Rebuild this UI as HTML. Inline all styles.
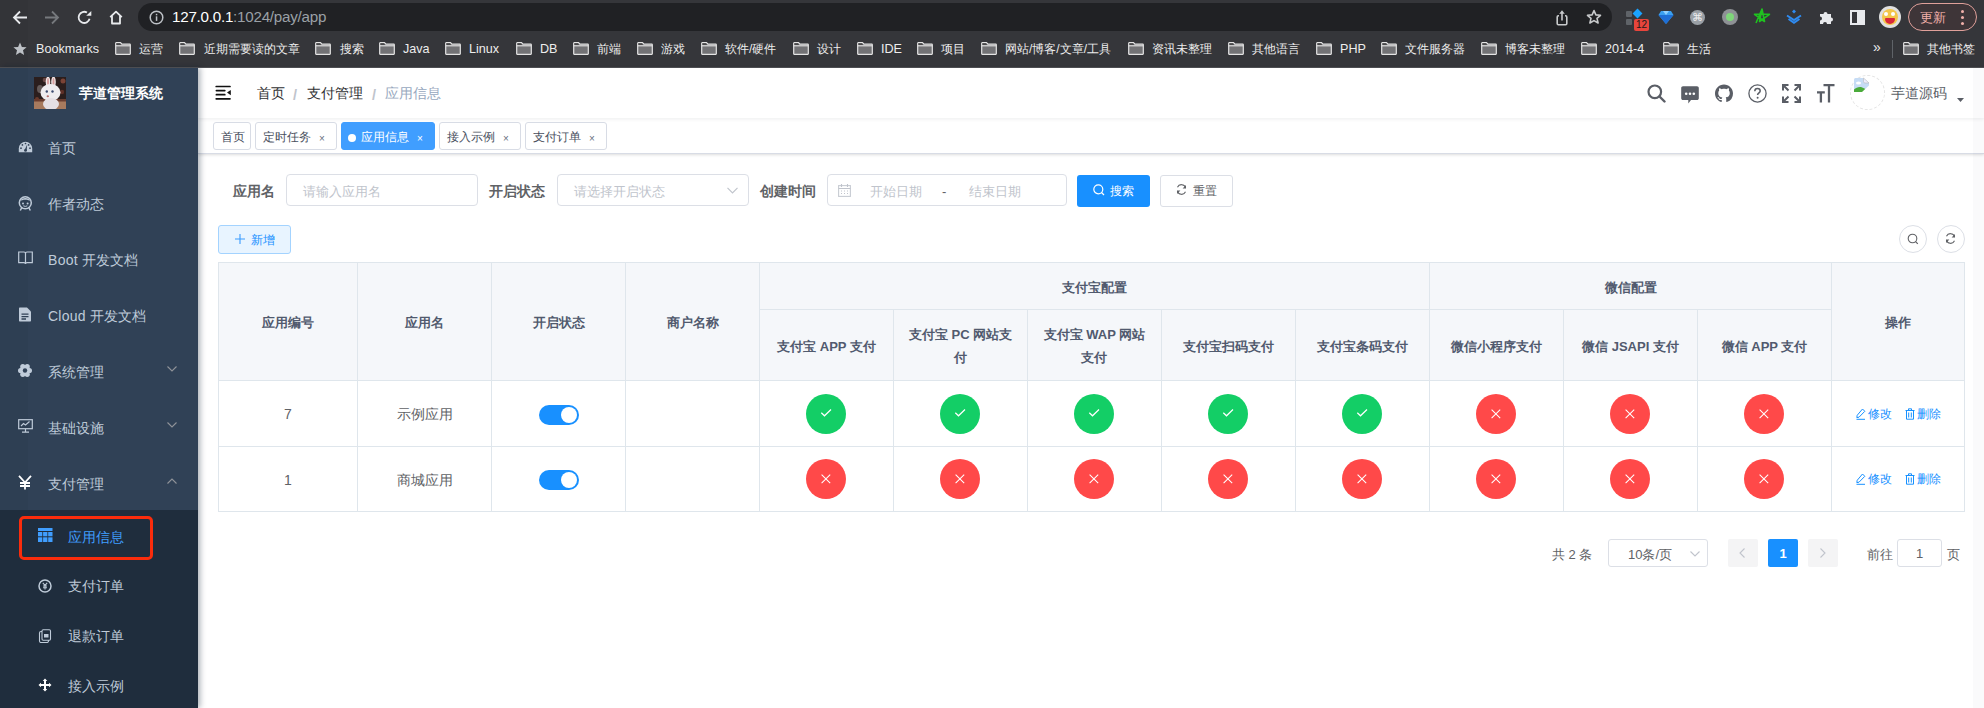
<!DOCTYPE html>
<html><head><meta charset="utf-8">
<style>
*{box-sizing:border-box}
html,body{margin:0;padding:0}
body{width:1984px;height:708px;overflow:hidden;position:relative;background:#fff;font-family:"Liberation Sans",sans-serif;}
.a{position:absolute}
.t{position:absolute;white-space:nowrap;line-height:1}
/* chrome */
#chrome{position:absolute;left:0;top:0;width:1984px;height:67px;background:#35363a}
#omni{position:absolute;left:138px;top:3px;width:1474px;height:28px;border-radius:14px;background:#202124}
.bm{position:absolute;top:43px;font-size:12px;color:#ededed;line-height:12px}
.fd{position:absolute;top:42px;width:16px;height:13px}
/* sidebar */
#side{position:absolute;left:0;top:67px;width:198px;height:641px;background:#304156;box-shadow:2px 0 6px rgba(0,21,41,.35);z-index:2}
.mi{position:absolute;left:0;width:198px;height:56px}
.mt{position:absolute;left:48px;font-size:14px;color:#bfcbd9;line-height:14px}
/* main */
#nav{position:absolute;left:198px;top:67px;width:1786px;height:51px;background:#fff;box-shadow:0 1px 4px rgba(0,21,41,.08);z-index:1}
#tags{position:absolute;left:198px;top:118px;width:1786px;height:36px;background:#fff;border-bottom:1px solid #d8dce5;box-shadow:0 1px 3px 0 rgba(0,0,0,.12),0 0 3px 0 rgba(0,0,0,.04)}
.tag{position:absolute;top:4px;height:28px;border:1px solid #d8dce5;border-radius:3px;background:#fff;color:#495060;font-size:12px;line-height:28px;padding-left:7px}
.tag .x{position:absolute;font-size:10px;color:#6a7080;line-height:28px}
.lbl{position:absolute;top:184px;font-size:14px;font-weight:700;color:#606266;line-height:14px}
.inp{position:absolute;top:174px;height:32px;border:1px solid #dcdfe6;border-radius:4px;background:#fff}
.ph{position:absolute;font-size:13px;color:#c0c4cc;line-height:13px;top:10px}
/* table */
#tbl{position:absolute;left:218px;top:261px;width:1747px;height:251px;border:1px solid #dfe6ec;border-right:none;border-bottom:none}
.cl{position:absolute;background:#dfe6ec}
.th{position:absolute;font-size:13px;font-weight:700;color:#515a6e;line-height:23px;text-align:center;white-space:nowrap}
.td{position:absolute;font-size:14px;color:#606266;line-height:14px;text-align:center;white-space:nowrap}
.ok,.no{position:absolute;width:40px;height:40px;border-radius:50%}
.ok{background:#13ce66}.no{background:#ff4949}
.sw{position:absolute;width:40px;height:20px;border-radius:10px;background:#1890ff}
.sw:after{content:"";position:absolute;right:2px;top:2px;width:16px;height:16px;border-radius:50%;background:#fff}
.lk{position:absolute;font-size:12px;color:#1890ff;line-height:12px}
</style></head><body>

<div id="chrome">
  <div class="a" style="left:0;top:0;width:28px;height:67px;background:rgba(0,0,0,.03)"></div>
  <svg class="a" style="left:12px;top:10px" width="16" height="15" viewBox="0 0 16 15"><path d="M15 7.5H2.5M8 1.5L2 7.5L8 13.5" fill="none" stroke="#e8eaed" stroke-width="1.8"/></svg>
  <svg class="a" style="left:44px;top:10px" width="16" height="15" viewBox="0 0 16 15"><path d="M1 7.5H13.5M8 1.5L14 7.5L8 13.5" fill="none" stroke="#76797d" stroke-width="1.8"/></svg>
  <svg class="a" style="left:76px;top:9px" width="17" height="17" viewBox="0 0 17 17"><path d="M13.6 9.85A5.6 5.6 0 1 1 11 3.55" fill="none" stroke="#e8eaed" stroke-width="1.8"/><path d="M10.2 6.8H15.3V2Z" fill="#e8eaed"/></svg>
  <svg class="a" style="left:108px;top:10px" width="16" height="15" viewBox="0 0 16 15"><path d="M2.2 7.2L8 1.6L13.8 7.2M4 5.8V13.5H12V5.8" fill="none" stroke="#e8eaed" stroke-width="1.8" stroke-linejoin="round"/></svg>
  <div id="omni"></div>
  <svg class="a" style="left:149px;top:10px" width="15" height="15" viewBox="0 0 15 15"><circle cx="7.5" cy="7.5" r="6.3" fill="none" stroke="#bdc1c6" stroke-width="1.5"/><rect x="6.8" y="6.3" width="1.5" height="4.6" fill="#bdc1c6"/><rect x="6.8" y="3.8" width="1.5" height="1.5" fill="#bdc1c6"/></svg>
  <div class="t" id="url" style="left:172px;top:9px;font-size:15.2px;line-height:15px;letter-spacing:-0.25px;color:#fff">127.0.0.1<span style="color:#9aa0a6">:1024/pay/app</span></div>
  <svg class="a" style="left:1554px;top:8px" width="16" height="18" viewBox="0 0 16 18"><path d="M5 7.8H4.3Q3.2 7.8 3.2 8.9V15.6Q3.2 16.7 4.3 16.7H11.7Q12.8 16.7 12.8 15.6V8.9Q12.8 7.8 11.7 7.8H11" fill="none" stroke="#c8cacc" stroke-width="1.6"/><path d="M8 12.5V5" stroke="#c8cacc" stroke-width="1.6"/><path d="M5.2 5.8L8 2.2L10.8 5.8Z" fill="#c8cacc"/></svg>
  <svg class="a" style="left:1585px;top:8px" width="18" height="18" viewBox="0 0 18 18"><path d="M9 2.6L10.9 6.9L15.5 7.3L12 10.4L13.1 15L9 12.6L4.9 15L6 10.4L2.5 7.3L7.1 6.9Z" fill="none" stroke="#c8cacc" stroke-width="1.6" stroke-linejoin="round"/></svg>
  <!-- extensions -->
  <div class="a" style="left:1626px;top:11px;width:6px;height:6px;background:#5f6368;border-radius:1px"></div>
  <div class="a" style="left:1626px;top:19px;width:6px;height:6px;background:#5f6368;border-radius:1px"></div>
  <div class="a" style="left:1634px;top:10px;width:7px;height:7px;background:#1aa3ff;transform:rotate(45deg)"></div>
  <div class="a" style="left:1634px;top:19px;width:15px;height:12px;background:#e8453c;border-radius:2px;color:#1a1a1a;font-size:10px;line-height:12px;text-align:center;font-weight:400">12</div>
  <svg class="a" style="left:1658px;top:9px" width="16" height="16" viewBox="0 0 16 16"><path d="M3 2H13L15.5 6L8 15L0.5 6Z" fill="#3ba0f0"/><path d="M0.5 6H15.5L8 15Z" fill="#1f6fd6"/><path d="M5 2L8 6L11 2" fill="#8fd0ff"/></svg>
  <div class="a" style="left:1690px;top:10px;width:15px;height:15px;border-radius:50%;background:#9aa0a6"></div>
  <div class="t" style="left:1692px;top:12px;font-size:11px;color:#eee;line-height:11px">&#8984;</div>
  <div class="a" style="left:1722px;top:9px;width:16px;height:16px;border-radius:50%;background:#8e9195"></div>
  <div class="a" style="left:1726px;top:13px;width:8px;height:8px;border-radius:50%;background:#7fd67a"></div>
  <svg class="a" style="left:1753px;top:8px" width="18" height="18" viewBox="0 0 18 18"><path d="M9 1L11.5 13.5L1.5 6.3H16.5L6.5 13.5Z M3 15L9 1" fill="none" stroke="#1fc21f" stroke-width="1.6" stroke-linejoin="round"/></svg>
  <svg class="a" style="left:1785px;top:8px" width="18" height="16" viewBox="0 0 18 16"><path d="M9 1.5L11 3.5L9 5.5L7 3.5Z" fill="#2f8bf0"/><path d="M2 7.5L9 12L16 7.5M3.5 11L9 14.8L14.5 11" fill="none" stroke="#2f8bf0" stroke-width="1.9"/></svg>
  <svg class="a" style="left:1818px;top:9px" width="16" height="16" viewBox="0 0 16 16"><path d="M2 5H5.5A2 2 0 1 1 9.5 5H13V8.5A2 2 0 1 1 13 12.5V15H9A2 2 0 1 0 5 15H2V11.5A2 2 0 1 0 2 7.5Z" fill="#e8eaed"/></svg>
  <div class="a" style="left:1850px;top:10px;width:15px;height:15px;border:2px solid #e8eaed"></div>
  <div class="a" style="left:1857px;top:10px;width:8px;height:15px;background:#e8eaed"></div>
  <div class="a" style="left:1879px;top:6px;width:22px;height:22px;border-radius:50%;background:#e0e0e0"></div>
  <div class="a" style="left:1882px;top:9px;width:16px;height:16px;border-radius:50%;background:#f3c64a"></div>
  <div class="a" style="left:1885px;top:18px;width:10px;height:6px;border-radius:1px 1px 5px 5px;background:#d8283a"></div><div class="a" style="left:1884px;top:12px;width:4px;height:4px;border-radius:50%;background:#fff"></div><div class="a" style="left:1891px;top:12px;width:4px;height:4px;border-radius:50%;background:#fff"></div>
  <div class="a" style="left:1908px;top:3px;width:69px;height:28px;border-radius:14px;border:1.5px solid #e0a09a;background:#3e3538"></div>
  <div class="t" style="left:1920px;top:11px;font-size:13px;line-height:13px;color:#f2b0aa">更新</div>
  <div class="a" style="left:1961px;top:10px;width:3px;height:3px;border-radius:50%;background:#f2b0aa;box-shadow:0 6px 0 #f2b0aa,0 12px 0 #f2b0aa"></div>
  <!-- bookmarks -->
  <svg class="a" style="left:13px;top:42px" width="14" height="14" viewBox="0 0 14 14"><path d="M7 0.5L8.9 4.9L13.6 5.2L10 8.3L11.1 12.9L7 10.4L2.9 12.9L4 8.3L0.4 5.2L5.1 4.9Z" fill="#bdc1c6"/></svg><div class="bm" style="left:36px;font-size:12.6px">Bookmarks</div><svg class="fd" style="left:115px" width="16" height="13" viewBox="0 0 16 13"><path d="M0.7 1.2Q0.7 0.7 1.2 0.7H5.5L7 2.2H14.8Q15.3 2.2 15.3 2.7V11.8Q15.3 12.3 14.8 12.3H1.2Q0.7 12.3 0.7 11.8Z" fill="#727275" stroke="#e4e4e4" stroke-width="1.2"/><path d="M1.3 1.5H5L6 2.6H1.3Z" fill="#1e1e20"/><path d="M0.7 3.8H15.3" stroke="#e4e4e4" stroke-width="1.1"/></svg><div class="bm" style="left:139px">运营</div><svg class="fd" style="left:179px" width="16" height="13" viewBox="0 0 16 13"><path d="M0.7 1.2Q0.7 0.7 1.2 0.7H5.5L7 2.2H14.8Q15.3 2.2 15.3 2.7V11.8Q15.3 12.3 14.8 12.3H1.2Q0.7 12.3 0.7 11.8Z" fill="#727275" stroke="#e4e4e4" stroke-width="1.2"/><path d="M1.3 1.5H5L6 2.6H1.3Z" fill="#1e1e20"/><path d="M0.7 3.8H15.3" stroke="#e4e4e4" stroke-width="1.1"/></svg><div class="bm" style="left:204px">近期需要读的文章</div><svg class="fd" style="left:315px" width="16" height="13" viewBox="0 0 16 13"><path d="M0.7 1.2Q0.7 0.7 1.2 0.7H5.5L7 2.2H14.8Q15.3 2.2 15.3 2.7V11.8Q15.3 12.3 14.8 12.3H1.2Q0.7 12.3 0.7 11.8Z" fill="#727275" stroke="#e4e4e4" stroke-width="1.2"/><path d="M1.3 1.5H5L6 2.6H1.3Z" fill="#1e1e20"/><path d="M0.7 3.8H15.3" stroke="#e4e4e4" stroke-width="1.1"/></svg><div class="bm" style="left:340px">搜索</div><svg class="fd" style="left:379px" width="16" height="13" viewBox="0 0 16 13"><path d="M0.7 1.2Q0.7 0.7 1.2 0.7H5.5L7 2.2H14.8Q15.3 2.2 15.3 2.7V11.8Q15.3 12.3 14.8 12.3H1.2Q0.7 12.3 0.7 11.8Z" fill="#727275" stroke="#e4e4e4" stroke-width="1.2"/><path d="M1.3 1.5H5L6 2.6H1.3Z" fill="#1e1e20"/><path d="M0.7 3.8H15.3" stroke="#e4e4e4" stroke-width="1.1"/></svg><div class="bm" style="left:403px;font-size:12.6px">Java</div><svg class="fd" style="left:445px" width="16" height="13" viewBox="0 0 16 13"><path d="M0.7 1.2Q0.7 0.7 1.2 0.7H5.5L7 2.2H14.8Q15.3 2.2 15.3 2.7V11.8Q15.3 12.3 14.8 12.3H1.2Q0.7 12.3 0.7 11.8Z" fill="#727275" stroke="#e4e4e4" stroke-width="1.2"/><path d="M1.3 1.5H5L6 2.6H1.3Z" fill="#1e1e20"/><path d="M0.7 3.8H15.3" stroke="#e4e4e4" stroke-width="1.1"/></svg><div class="bm" style="left:469px;font-size:12.6px">Linux</div><svg class="fd" style="left:516px" width="16" height="13" viewBox="0 0 16 13"><path d="M0.7 1.2Q0.7 0.7 1.2 0.7H5.5L7 2.2H14.8Q15.3 2.2 15.3 2.7V11.8Q15.3 12.3 14.8 12.3H1.2Q0.7 12.3 0.7 11.8Z" fill="#727275" stroke="#e4e4e4" stroke-width="1.2"/><path d="M1.3 1.5H5L6 2.6H1.3Z" fill="#1e1e20"/><path d="M0.7 3.8H15.3" stroke="#e4e4e4" stroke-width="1.1"/></svg><div class="bm" style="left:540px;font-size:12.6px">DB</div><svg class="fd" style="left:573px" width="16" height="13" viewBox="0 0 16 13"><path d="M0.7 1.2Q0.7 0.7 1.2 0.7H5.5L7 2.2H14.8Q15.3 2.2 15.3 2.7V11.8Q15.3 12.3 14.8 12.3H1.2Q0.7 12.3 0.7 11.8Z" fill="#727275" stroke="#e4e4e4" stroke-width="1.2"/><path d="M1.3 1.5H5L6 2.6H1.3Z" fill="#1e1e20"/><path d="M0.7 3.8H15.3" stroke="#e4e4e4" stroke-width="1.1"/></svg><div class="bm" style="left:597px">前端</div><svg class="fd" style="left:637px" width="16" height="13" viewBox="0 0 16 13"><path d="M0.7 1.2Q0.7 0.7 1.2 0.7H5.5L7 2.2H14.8Q15.3 2.2 15.3 2.7V11.8Q15.3 12.3 14.8 12.3H1.2Q0.7 12.3 0.7 11.8Z" fill="#727275" stroke="#e4e4e4" stroke-width="1.2"/><path d="M1.3 1.5H5L6 2.6H1.3Z" fill="#1e1e20"/><path d="M0.7 3.8H15.3" stroke="#e4e4e4" stroke-width="1.1"/></svg><div class="bm" style="left:661px">游戏</div><svg class="fd" style="left:701px" width="16" height="13" viewBox="0 0 16 13"><path d="M0.7 1.2Q0.7 0.7 1.2 0.7H5.5L7 2.2H14.8Q15.3 2.2 15.3 2.7V11.8Q15.3 12.3 14.8 12.3H1.2Q0.7 12.3 0.7 11.8Z" fill="#727275" stroke="#e4e4e4" stroke-width="1.2"/><path d="M1.3 1.5H5L6 2.6H1.3Z" fill="#1e1e20"/><path d="M0.7 3.8H15.3" stroke="#e4e4e4" stroke-width="1.1"/></svg><div class="bm" style="left:725px">软件/硬件</div><svg class="fd" style="left:793px" width="16" height="13" viewBox="0 0 16 13"><path d="M0.7 1.2Q0.7 0.7 1.2 0.7H5.5L7 2.2H14.8Q15.3 2.2 15.3 2.7V11.8Q15.3 12.3 14.8 12.3H1.2Q0.7 12.3 0.7 11.8Z" fill="#727275" stroke="#e4e4e4" stroke-width="1.2"/><path d="M1.3 1.5H5L6 2.6H1.3Z" fill="#1e1e20"/><path d="M0.7 3.8H15.3" stroke="#e4e4e4" stroke-width="1.1"/></svg><div class="bm" style="left:817px">设计</div><svg class="fd" style="left:857px" width="16" height="13" viewBox="0 0 16 13"><path d="M0.7 1.2Q0.7 0.7 1.2 0.7H5.5L7 2.2H14.8Q15.3 2.2 15.3 2.7V11.8Q15.3 12.3 14.8 12.3H1.2Q0.7 12.3 0.7 11.8Z" fill="#727275" stroke="#e4e4e4" stroke-width="1.2"/><path d="M1.3 1.5H5L6 2.6H1.3Z" fill="#1e1e20"/><path d="M0.7 3.8H15.3" stroke="#e4e4e4" stroke-width="1.1"/></svg><div class="bm" style="left:881px;font-size:12.6px">IDE</div><svg class="fd" style="left:917px" width="16" height="13" viewBox="0 0 16 13"><path d="M0.7 1.2Q0.7 0.7 1.2 0.7H5.5L7 2.2H14.8Q15.3 2.2 15.3 2.7V11.8Q15.3 12.3 14.8 12.3H1.2Q0.7 12.3 0.7 11.8Z" fill="#727275" stroke="#e4e4e4" stroke-width="1.2"/><path d="M1.3 1.5H5L6 2.6H1.3Z" fill="#1e1e20"/><path d="M0.7 3.8H15.3" stroke="#e4e4e4" stroke-width="1.1"/></svg><div class="bm" style="left:941px">项目</div><svg class="fd" style="left:981px" width="16" height="13" viewBox="0 0 16 13"><path d="M0.7 1.2Q0.7 0.7 1.2 0.7H5.5L7 2.2H14.8Q15.3 2.2 15.3 2.7V11.8Q15.3 12.3 14.8 12.3H1.2Q0.7 12.3 0.7 11.8Z" fill="#727275" stroke="#e4e4e4" stroke-width="1.2"/><path d="M1.3 1.5H5L6 2.6H1.3Z" fill="#1e1e20"/><path d="M0.7 3.8H15.3" stroke="#e4e4e4" stroke-width="1.1"/></svg><div class="bm" style="left:1005px">网站/博客/文章/工具</div><svg class="fd" style="left:1128px" width="16" height="13" viewBox="0 0 16 13"><path d="M0.7 1.2Q0.7 0.7 1.2 0.7H5.5L7 2.2H14.8Q15.3 2.2 15.3 2.7V11.8Q15.3 12.3 14.8 12.3H1.2Q0.7 12.3 0.7 11.8Z" fill="#727275" stroke="#e4e4e4" stroke-width="1.2"/><path d="M1.3 1.5H5L6 2.6H1.3Z" fill="#1e1e20"/><path d="M0.7 3.8H15.3" stroke="#e4e4e4" stroke-width="1.1"/></svg><div class="bm" style="left:1152px">资讯未整理</div><svg class="fd" style="left:1228px" width="16" height="13" viewBox="0 0 16 13"><path d="M0.7 1.2Q0.7 0.7 1.2 0.7H5.5L7 2.2H14.8Q15.3 2.2 15.3 2.7V11.8Q15.3 12.3 14.8 12.3H1.2Q0.7 12.3 0.7 11.8Z" fill="#727275" stroke="#e4e4e4" stroke-width="1.2"/><path d="M1.3 1.5H5L6 2.6H1.3Z" fill="#1e1e20"/><path d="M0.7 3.8H15.3" stroke="#e4e4e4" stroke-width="1.1"/></svg><div class="bm" style="left:1252px">其他语言</div><svg class="fd" style="left:1316px" width="16" height="13" viewBox="0 0 16 13"><path d="M0.7 1.2Q0.7 0.7 1.2 0.7H5.5L7 2.2H14.8Q15.3 2.2 15.3 2.7V11.8Q15.3 12.3 14.8 12.3H1.2Q0.7 12.3 0.7 11.8Z" fill="#727275" stroke="#e4e4e4" stroke-width="1.2"/><path d="M1.3 1.5H5L6 2.6H1.3Z" fill="#1e1e20"/><path d="M0.7 3.8H15.3" stroke="#e4e4e4" stroke-width="1.1"/></svg><div class="bm" style="left:1340px;font-size:12.6px">PHP</div><svg class="fd" style="left:1381px" width="16" height="13" viewBox="0 0 16 13"><path d="M0.7 1.2Q0.7 0.7 1.2 0.7H5.5L7 2.2H14.8Q15.3 2.2 15.3 2.7V11.8Q15.3 12.3 14.8 12.3H1.2Q0.7 12.3 0.7 11.8Z" fill="#727275" stroke="#e4e4e4" stroke-width="1.2"/><path d="M1.3 1.5H5L6 2.6H1.3Z" fill="#1e1e20"/><path d="M0.7 3.8H15.3" stroke="#e4e4e4" stroke-width="1.1"/></svg><div class="bm" style="left:1405px">文件服务器</div><svg class="fd" style="left:1481px" width="16" height="13" viewBox="0 0 16 13"><path d="M0.7 1.2Q0.7 0.7 1.2 0.7H5.5L7 2.2H14.8Q15.3 2.2 15.3 2.7V11.8Q15.3 12.3 14.8 12.3H1.2Q0.7 12.3 0.7 11.8Z" fill="#727275" stroke="#e4e4e4" stroke-width="1.2"/><path d="M1.3 1.5H5L6 2.6H1.3Z" fill="#1e1e20"/><path d="M0.7 3.8H15.3" stroke="#e4e4e4" stroke-width="1.1"/></svg><div class="bm" style="left:1505px">博客未整理</div><svg class="fd" style="left:1581px" width="16" height="13" viewBox="0 0 16 13"><path d="M0.7 1.2Q0.7 0.7 1.2 0.7H5.5L7 2.2H14.8Q15.3 2.2 15.3 2.7V11.8Q15.3 12.3 14.8 12.3H1.2Q0.7 12.3 0.7 11.8Z" fill="#727275" stroke="#e4e4e4" stroke-width="1.2"/><path d="M1.3 1.5H5L6 2.6H1.3Z" fill="#1e1e20"/><path d="M0.7 3.8H15.3" stroke="#e4e4e4" stroke-width="1.1"/></svg><div class="bm" style="left:1605px;font-size:12.6px">2014-4</div><svg class="fd" style="left:1663px" width="16" height="13" viewBox="0 0 16 13"><path d="M0.7 1.2Q0.7 0.7 1.2 0.7H5.5L7 2.2H14.8Q15.3 2.2 15.3 2.7V11.8Q15.3 12.3 14.8 12.3H1.2Q0.7 12.3 0.7 11.8Z" fill="#727275" stroke="#e4e4e4" stroke-width="1.2"/><path d="M1.3 1.5H5L6 2.6H1.3Z" fill="#1e1e20"/><path d="M0.7 3.8H15.3" stroke="#e4e4e4" stroke-width="1.1"/></svg><div class="bm" style="left:1687px">生活</div><svg class="fd" style="left:1903px" width="16" height="13" viewBox="0 0 16 13"><path d="M0.7 1.2Q0.7 0.7 1.2 0.7H5.5L7 2.2H14.8Q15.3 2.2 15.3 2.7V11.8Q15.3 12.3 14.8 12.3H1.2Q0.7 12.3 0.7 11.8Z" fill="#727275" stroke="#e4e4e4" stroke-width="1.2"/><path d="M1.3 1.5H5L6 2.6H1.3Z" fill="#1e1e20"/><path d="M0.7 3.8H15.3" stroke="#e4e4e4" stroke-width="1.1"/></svg><div class="bm" style="left:1927px">其他书签</div><div class="bm" style="left:1873px;font-size:14px;top:41px">&raquo;</div><div class="a" style="left:1892px;top:40px;width:1px;height:18px;background:#5f6368"></div>
</div>

<div id="side">
  <div class="a" style="left:0;top:0;width:28px;height:641px;background:rgba(0,0,0,.025)"></div>
  <div class="a" style="left:0;top:443px;width:198px;height:198px;background:#1f2d3d"></div>
  <svg class="a" style="left:34px;top:10px" width="32" height="32" viewBox="0 0 32 32">
    <rect width="32" height="32" fill="#2b1e1d"/><rect y="24" width="32" height="8" fill="#a77a5e"/><rect y="22" width="32" height="2.5" fill="#6a3d30"/>
    <circle cx="29" cy="4" r="2.5" fill="#7a4336"/><circle cx="28" cy="15" r="2.2" fill="#5e3028"/><circle cx="3" cy="22" r="2" fill="#6a3a2c"/><circle cx="11" cy="3" r="2.3" fill="#6b4a48"/>
    <ellipse cx="6" cy="12" rx="3" ry="4" fill="#8a8282" opacity=".6"/>
    <ellipse cx="14" cy="5" rx="2.3" ry="5.5" fill="#efe6e6"/><ellipse cx="14" cy="5" rx="1" ry="4" fill="#d8a0a0"/>
    <ellipse cx="19.5" cy="5" rx="2.3" ry="5.5" fill="#efe6e6"/><ellipse cx="19.5" cy="5" rx="1" ry="4" fill="#d8a0a0"/>
    <ellipse cx="16.5" cy="15.5" rx="10" ry="8.5" fill="#eeecef"/>
    <ellipse cx="17" cy="27" rx="8" ry="6" fill="#e4dfe4"/>
    <circle cx="12.8" cy="14.5" r="1.2" fill="#3b4a70"/><circle cx="18.5" cy="14.5" r="1.2" fill="#3b4a70"/><ellipse cx="13.8" cy="19.3" rx="1.2" ry="1" fill="#b46a6a"/>
  </svg>
  <div class="t" style="left:79px;top:19.5px;font-size:13.6px;line-height:14px;color:#fff;font-weight:700">芋道管理系统</div>

  <svg class="a" style="left:18px;top:74px" width="15" height="12" viewBox="0 0 15 12"><path d="M0.8 11.2V7.5A6.7 6.7 0 0 1 14.2 7.5V11.2Z" fill="#bfcbd9"/><circle cx="3" cy="7.2" r="0.85" fill="#304156"/><circle cx="4.4" cy="3.9" r="0.85" fill="#304156"/><circle cx="7.5" cy="2.5" r="0.85" fill="#304156"/><circle cx="10.6" cy="3.9" r="0.85" fill="#304156"/><circle cx="12" cy="7.2" r="0.85" fill="#304156"/><path d="M6.4 9.6L9.2 3.6L8.6 10Z" fill="#304156"/><circle cx="7.5" cy="9.4" r="1.4" fill="#304156"/></svg>
  <div class="t mt" style="top:74px">首页</div>

  <svg class="a" style="left:18px;top:129px" width="15" height="15" viewBox="0 0 15 15"><circle cx="7.3" cy="6.8" r="6" fill="none" stroke="#bfcbd9" stroke-width="1.5"/><path d="M2 5.2C4 3.2 10.6 3.2 12.6 5.2A6 6 0 0 0 2 5.2Z" fill="#bfcbd9"/><circle cx="5" cy="7.6" r="1" fill="#bfcbd9"/><circle cx="9.6" cy="7.6" r="1" fill="#bfcbd9"/><path d="M5.3 9.8Q7.3 11 9.3 9.8" fill="none" stroke="#bfcbd9" stroke-width="1"/><path d="M3.8 11.5L2.3 14.5M10.8 11.5L12.3 14.5" stroke="#bfcbd9" stroke-width="1.5"/></svg>
  <div class="t mt" style="top:130px">作者动态</div>

  <svg class="a" style="left:18px;top:184px" width="15" height="14" viewBox="0 0 15 14"><path d="M0.7 1H6C6.9 1 7.5 1.6 7.5 2.5V13C7.5 12.2 6.9 11.7 6 11.7H0.7Z M14.3 1H9C8.1 1 7.5 1.6 7.5 2.5V13C7.5 12.2 8.1 11.7 9 11.7H14.3Z" fill="none" stroke="#bfcbd9" stroke-width="1.2"/></svg>
  <div class="t mt" style="top:186px"><span style="letter-spacing:.3px">Boot</span> 开发文档</div>

  <svg class="a" style="left:18px;top:240px" width="14" height="15" viewBox="0 0 14 15"><path d="M1 1.5C1 0.9 1.4 0.5 2 0.5H9L13 4.5V13.5C13 14.1 12.6 14.5 12 14.5H2C1.4 14.5 1 14.1 1 13.5Z" fill="#bfcbd9"/><path d="M3.5 7.2H10.5M3.5 9.6H10.5M3.5 12H8" stroke="#304156" stroke-width="1.3"/></svg>
  <div class="t mt" style="top:242px"><span style="letter-spacing:.25px">Cloud</span> 开发文档</div>

  <svg class="a" style="left:18px;top:297px" width="14" height="13" viewBox="0 0 14 13"><circle cx="7" cy="6.5" r="5" fill="#bfcbd9"/><circle cx="11.40" cy="6.50" r="2.6" fill="#bfcbd9"/><circle cx="9.20" cy="10.31" r="2.6" fill="#bfcbd9"/><circle cx="4.80" cy="10.31" r="2.6" fill="#bfcbd9"/><circle cx="2.60" cy="6.50" r="2.6" fill="#bfcbd9"/><circle cx="4.80" cy="2.69" r="2.6" fill="#bfcbd9"/><circle cx="9.20" cy="2.69" r="2.6" fill="#bfcbd9"/><circle cx="7" cy="6.5" r="2.2" fill="#304156"/></svg>
  <div class="t mt" style="top:298px">系统管理</div>
  <svg class="a" style="left:167px;top:299px" width="10" height="6" viewBox="0 0 10 6"><path d="M0.5 0.5L5 5L9.5 0.5" fill="none" stroke="#909399" stroke-width="1.1"/></svg>

  <svg class="a" style="left:18px;top:352px" width="15" height="14" viewBox="0 0 15 14"><rect x="0.7" y="0.7" width="13.6" height="9" fill="none" stroke="#bfcbd9" stroke-width="1.2"/><path d="M3 7L5.5 4.5L7.5 6L11.5 2.5" fill="none" stroke="#bfcbd9" stroke-width="1.1"/><path d="M7.5 9.7V13M4 13.2H11" stroke="#bfcbd9" stroke-width="1.2"/></svg>
  <div class="t mt" style="top:354px">基础设施</div>
  <svg class="a" style="left:167px;top:355px" width="10" height="6" viewBox="0 0 10 6"><path d="M0.5 0.5L5 5L9.5 0.5" fill="none" stroke="#909399" stroke-width="1.1"/></svg>

  <svg class="a" style="left:18px;top:408px" width="14" height="15" viewBox="0 0 14 15"><path d="M1 0.8L7 7.5L13 0.8M7 7.5V14.5M2 8H12M2 11H12" fill="none" stroke="#fff" stroke-width="1.8"/></svg>
  <div class="t mt" style="top:410px">支付管理</div>
  <svg class="a" style="left:167px;top:411px" width="10" height="6" viewBox="0 0 10 6"><path d="M0.5 5.5L5 1L9.5 5.5" fill="none" stroke="#909399" stroke-width="1.1"/></svg>

  <svg class="a" style="left:38px;top:461px" width="15" height="14" viewBox="0 0 15 14"><rect x="0" y="0" width="14.5" height="3" fill="#409eff"/><rect x="0" y="4" width="4.3" height="4.3" fill="#409eff"/><rect x="5.1" y="4" width="4.3" height="4.3" fill="#409eff"/><rect x="10.2" y="4" width="4.3" height="4.3" fill="#409eff"/><rect x="0" y="9.3" width="4.3" height="4.7" fill="#409eff"/><rect x="5.1" y="9.3" width="4.3" height="4.7" fill="#409eff"/><rect x="10.2" y="9.3" width="4.3" height="4.7" fill="#409eff"/></svg>
  <div class="t mt" style="left:68px;top:463px;color:#409eff">应用信息</div>
  <div class="a" style="left:19px;top:449px;width:134px;height:44px;border:3px solid #fa2c0c;border-radius:5px"></div>

  <svg class="a" style="left:38px;top:512px" width="14" height="14" viewBox="0 0 14 14"><circle cx="7" cy="7" r="6" fill="none" stroke="#bfcbd9" stroke-width="1.5"/><path d="M4.8 3.8L7 6.3L9.2 3.8M7 6.3V10.5M5 7H9M5 8.7H9" fill="none" stroke="#bfcbd9" stroke-width="1.1"/></svg>
  <div class="t mt" style="left:68px;top:512px">支付订单</div>

  <svg class="a" style="left:38px;top:562px" width="14" height="14" viewBox="0 0 14 14"><path d="M4 2.5H3C2.2 2.5 1.5 3.2 1.5 4V12C1.5 12.8 2.2 13.5 3 13.5H9C9.8 13.5 10.5 12.8 10.5 12V11" fill="none" stroke="#bfcbd9" stroke-width="1.1"/><rect x="4" y="0.8" width="8.5" height="10.5" rx="1.2" fill="none" stroke="#bfcbd9" stroke-width="1.1"/><rect x="6" y="5" width="4.5" height="3.5" fill="#bfcbd9"/></svg>
  <div class="t mt" style="left:68px;top:562px">退款订单</div>

  <svg class="a" style="left:38px;top:611px" width="14" height="14" viewBox="0 0 14 14"><path d="M7 0.5L9.3 3H4.7Z M7 13.5L9.3 11H4.7Z M0.5 7L3 4.7V9.3Z M13.5 7L11 4.7V9.3Z" fill="#fff"/><path d="M7 2.5V11.5M2.5 7H11.5" stroke="#fff" stroke-width="2"/></svg>
  <div class="t mt" style="left:68px;top:612px">接入示例</div>
</div>

<div class="a" style="left:0;top:67px;width:1984px;height:1px;background:#4d4e52;z-index:5"></div>
<div id="nav">
  <svg class="a" style="left:17px;top:18px" width="17" height="15" viewBox="0 0 17 15"><path d="M1.2 1.5H15M1.4 5.6H9.8M1.4 9.7H9.8M1.2 13.8H15" stroke="#111" stroke-width="1.7" stroke-linecap="round"/><path d="M12 7.6L15.8 5V10.2Z" fill="#111"/></svg>
  <div class="t" style="left:59px;top:19px;font-size:14px;line-height:14px;color:#303133">首页</div>
  <div class="t" style="left:95px;top:21px;font-size:14.5px;line-height:14px;color:#c0c4cc;font-weight:700">/</div>
  <div class="t" style="left:109px;top:19px;font-size:14px;line-height:14px;color:#303133">支付管理</div>
  <div class="t" style="left:174px;top:21px;font-size:14.5px;line-height:14px;color:#c0c4cc;font-weight:700">/</div>
  <div class="t" style="left:187px;top:19px;font-size:14px;line-height:14px;color:#97a8be">应用信息</div>
  <!-- right icons -->
  <svg class="a" style="left:1449px;top:16.5px" width="19" height="19" viewBox="0 0 19 19"><circle cx="7.8" cy="7.8" r="6.3" fill="none" stroke="#5a5e66" stroke-width="2.2"/><path d="M12.5 12.5L17.5 17.5" stroke="#5a5e66" stroke-width="2.4" stroke-linecap="round"/></svg>
  <svg class="a" style="left:1483px;top:19px" width="18" height="18" viewBox="0 0 18 18"><path d="M2 0.2H16C17 0.2 17.8 1 17.8 2V12.3C17.8 13.3 17 14.1 16 14.1H10L7.3 17.5V14.1H2C1 14.1 0.2 13.3 0.2 12.3V2C0.2 1 1 0.2 2 0.2Z" fill="#5a5e66"/><circle cx="5.2" cy="7.8" r="1.3" fill="#fff"/><circle cx="9" cy="7.8" r="1.3" fill="#fff"/><circle cx="12.8" cy="7.8" r="1.3" fill="#fff"/></svg>
  <svg class="a" style="left:1517px;top:17px" width="18" height="19" viewBox="0 0 16 16"><path fill="#5a5e66" d="M8 0C3.58 0 0 3.58 0 8c0 3.54 2.29 6.53 5.47 7.59.4.07.55-.17.55-.38 0-.19-.01-.82-.01-1.49-2.01.37-2.53-.49-2.69-.94-.09-.23-.48-.94-.82-1.13-.28-.15-.68-.52-.01-.53.63-.01 1.08.58 1.23.82.72 1.21 1.87.87 2.33.66.07-.52.28-.87.51-1.07-1.78-.2-3.64-.89-3.64-3.95 0-.87.31-1.59.82-2.15-.08-.2-.36-1.02.08-2.12 0 0 .67-.21 2.2.82.64-.18 1.32-.27 2-.27.68 0 1.36.09 2 .27 1.53-1.04 2.2-.82 2.2-.82.44 1.1.16 1.92.08 2.12.51.56.82 1.27.82 2.15 0 3.07-1.87 3.75-3.65 3.95.29.25.54.73.54 1.48 0 1.07-.01 1.93-.01 2.2 0 .21.15.46.55.38A8.013 8.013 0 0016 8c0-4.42-3.58-8-8-8z"/></svg>
  <svg class="a" style="left:1550px;top:17px" width="19" height="19" viewBox="0 0 19 19"><circle cx="9.5" cy="9.5" r="8.6" fill="none" stroke="#5a5e66" stroke-width="1.3"/><path d="M6.8 7.2C6.8 5.6 8 4.6 9.5 4.6C11 4.6 12.2 5.6 12.2 7C12.2 8.7 9.6 9 9.6 11" fill="none" stroke="#5a5e66" stroke-width="1.5"/><circle cx="9.6" cy="13.8" r="1" fill="#5a5e66"/></svg>
  <svg class="a" style="left:1584px;top:17px" width="19" height="19" viewBox="0 0 19 19"><path d="M1 6.5V1H6.5M12.5 1H18V6.5M18 12.5V18H12.5M6.5 18H1V12.5" fill="none" stroke="#5a5e66" stroke-width="2"/><path d="M1.5 1.5L6.5 6.5M17.5 1.5L12.5 6.5M17.5 17.5L12.5 12.5M1.5 17.5L6.5 12.5" stroke="#5a5e66" stroke-width="2"/></svg>
  <svg class="a" style="left:1618px;top:16.5px" width="19" height="19" viewBox="0 0 19 19"><path d="M7.5 1.2H18.5M13 1.2V18.5M1 8.3H8.8M4.9 8.3V18.5" fill="none" stroke="#5a5e66" stroke-width="2.3"/></svg>
  <div class="a" style="left:1652px;top:8px;width:35px;height:35px;border-radius:50%;border:1px dashed #e4e4e4;overflow:hidden;background:#fff"></div>
  <svg class="a" style="left:1655px;top:10px" width="17" height="17" viewBox="0 0 17 17"><path d="M1 2.5Q1 1 2.5 1H10.5L16 6V15H1Z" fill="#c6dcf5"/><ellipse cx="5.5" cy="6" rx="2.6" ry="1.5" fill="#fff"/><path d="M1 15V12.5C4 9.5 8 9 11.5 11.5L16 15Z" fill="#4aab3a"/><path d="M9 15L16 8.5V15Z" fill="#fff"/><path d="M10.5 1L16 6H12Q10.5 6 10.5 4.5Z" fill="#eef" stroke="#bbb" stroke-width="0.6"/></svg>
  <div class="t" style="left:1693px;top:19px;font-size:14px;line-height:14px;color:#5a5e66">芋道源码</div>
  <svg class="a" style="left:1759px;top:30.5px" width="7" height="4" viewBox="0 0 7 4"><path d="M0 0H7L3.5 4Z" fill="#5a5e66"/></svg>
</div>
<div id="tags">
  <div class="tag" style="left:15px;width:38px">首页</div>
  <div class="tag" style="left:57px;width:82px">定时任务<span class="x" style="left:63px;top:1.5px">&#215;</span></div>
  <div class="tag" style="left:143px;width:94px;background:#409eff;border-color:#409eff;color:#fff;padding-left:7px"><span class="a" style="left:6px;top:10.5px;width:8px;height:8px;border-radius:50%;background:#fff"></span><span class="a" style="left:19px;top:0">应用信息</span><span class="x" style="left:75px;top:2px;color:#fff">&#215;</span></div>
  <div class="tag" style="left:241px;width:82px">接入示例<span class="x" style="left:63px;top:1.5px">&#215;</span></div>
  <div class="tag" style="left:327px;width:82px">支付订单<span class="x" style="left:63px;top:1.5px">&#215;</span></div>
</div>

<div id="content">
  <div class="lbl" style="left:233px">应用名</div>
  <div class="inp" style="left:286px;width:192px"><span class="ph" style="left:16px">请输入应用名</span></div>
  <div class="lbl" style="left:489px">开启状态</div>
  <div class="inp" style="left:557px;width:192px"><span class="ph" style="left:16px">请选择开启状态</span>
    <svg class="a" style="left:169px;top:12px" width="11" height="7" viewBox="0 0 11 7"><path d="M0.5 0.8L5.5 5.8L10.5 0.8" fill="none" stroke="#c0c4cc" stroke-width="1.2"/></svg></div>
  <div class="lbl" style="left:760px">创建时间</div>
  <div class="inp" style="left:827px;width:240px">
    <svg class="a" style="left:10px;top:9px" width="13" height="13" viewBox="0 0 13 13"><rect x="0.6" y="1.6" width="11.8" height="10.8" fill="none" stroke="#c8ccd3" stroke-width="1.1"/><path d="M0.6 4.5H12.4M3.5 0V3M9.5 0V3" stroke="#c0c4cc" stroke-width="1.1"/><path d="M3 7H4M6 7H7M9 7H10M3 9.5H4M6 9.5H7M9 9.5H10" stroke="#c0c4cc" stroke-width="1"/></svg>
    <span class="ph" style="left:42px">开始日期</span>
    <span class="ph" style="left:114px;color:#606266">-</span>
    <span class="ph" style="left:141px">结束日期</span>
  </div>
  <div class="a" style="left:1077px;top:175px;width:73px;height:32px;border-radius:3px;background:#1890ff"></div>
  <svg class="a" style="left:1093px;top:184px" width="12" height="12" viewBox="0 0 12 12"><circle cx="5.3" cy="5.3" r="4.5" fill="none" stroke="#fff" stroke-width="1.2"/><path d="M8.5 8.5L11 11" stroke="#fff" stroke-width="1.2"/></svg>
  <div class="t" style="left:1110px;top:185px;font-size:12px;line-height:12px;color:#fff">搜索</div>
  <div class="a" style="left:1160px;top:175px;width:73px;height:32px;border-radius:3px;background:#fff;border:1px solid #dcdfe6"></div>
  <svg class="a" style="left:1176px;top:184px" width="11" height="11" viewBox="0 0 11 11"><path d="M9.6 4A4.3 4.3 0 0 0 1.5 3.2M1.4 7A4.3 4.3 0 0 0 9.5 7.8" fill="none" stroke="#606266" stroke-width="1.1"/><path d="M10 1V4.6H6.6Z M1 10V6.4H4.4Z" fill="#606266"/></svg>
  <div class="t" style="left:1193px;top:185px;font-size:12px;line-height:12px;color:#606266">重置</div>

  <div class="a" style="left:218px;top:225px;width:73px;height:29px;border-radius:3px;background:#e8f4ff;border:1px solid #a3d3ff"></div>
  <svg class="a" style="left:235px;top:234px" width="10" height="10" viewBox="0 0 10 10"><path d="M5 0V10M0 5H10" stroke="#3a9cff" stroke-width="1.1"/></svg>
  <div class="t" style="left:251px;top:234px;font-size:12px;line-height:12px;color:#1890ff">新增</div>

  <div class="a" style="left:1899px;top:225px;width:28px;height:28px;border-radius:50%;border:1px solid #dcdfe6"></div>
  <svg class="a" style="left:1907px;top:233px" width="12" height="12" viewBox="0 0 12 12"><circle cx="5.5" cy="5.5" r="4.3" fill="none" stroke="#606266" stroke-width="1.1"/><path d="M8.6 8.6L10.8 10.8" stroke="#606266" stroke-width="1.2"/></svg>
  <div class="a" style="left:1937px;top:225px;width:28px;height:28px;border-radius:50%;border:1px solid #dcdfe6"></div>
  <svg class="a" style="left:1945px;top:233px" width="11" height="11" viewBox="0 0 11 11"><path d="M9.6 4A4.3 4.3 0 0 0 1.5 3.2M1.4 7A4.3 4.3 0 0 0 9.5 7.8" fill="none" stroke="#606266" stroke-width="1.1"/><path d="M10 1V4.6H6.6Z M1 10V6.4H4.4Z" fill="#606266"/></svg>
<!--TABLE-->
<div class="a" style="left:218px;top:262px;width:1747px;height:118px;background:#f5f7fa"></div>
<div class="cl" style="left:218px;top:262px;width:1747px;height:1px"></div>
<div class="cl" style="left:759px;top:309px;width:1073px;height:1px"></div>
<div class="cl" style="left:218px;top:380px;width:1747px;height:1px"></div>
<div class="cl" style="left:218px;top:446px;width:1747px;height:1px"></div>
<div class="cl" style="left:218px;top:511px;width:1747px;height:1px"></div>
<div class="cl" style="left:218px;top:262px;width:1px;height:250px"></div>
<div class="cl" style="left:357px;top:262px;width:1px;height:250px"></div>
<div class="cl" style="left:491px;top:262px;width:1px;height:250px"></div>
<div class="cl" style="left:625px;top:262px;width:1px;height:250px"></div>
<div class="cl" style="left:759px;top:262px;width:1px;height:250px"></div>
<div class="cl" style="left:893px;top:309px;width:1px;height:203px"></div>
<div class="cl" style="left:1027px;top:309px;width:1px;height:203px"></div>
<div class="cl" style="left:1161px;top:309px;width:1px;height:203px"></div>
<div class="cl" style="left:1295px;top:309px;width:1px;height:203px"></div>
<div class="cl" style="left:1429px;top:262px;width:1px;height:250px"></div>
<div class="cl" style="left:1563px;top:309px;width:1px;height:203px"></div>
<div class="cl" style="left:1697px;top:309px;width:1px;height:203px"></div>
<div class="cl" style="left:1831px;top:262px;width:1px;height:250px"></div>
<div class="cl" style="left:1964px;top:262px;width:1px;height:250px"></div>
<div class="th" style="left:219px;width:138px;top:263px;height:117px;display:flex;align-items:center;justify-content:center"><div style="position:relative;top:1px">应用编号</div></div>
<div class="th" style="left:358px;width:133px;top:263px;height:117px;display:flex;align-items:center;justify-content:center"><div style="position:relative;top:1px">应用名</div></div>
<div class="th" style="left:492px;width:133px;top:263px;height:117px;display:flex;align-items:center;justify-content:center"><div style="position:relative;top:1px">开启状态</div></div>
<div class="th" style="left:626px;width:133px;top:263px;height:117px;display:flex;align-items:center;justify-content:center"><div style="position:relative;top:1px">商户名称</div></div>
<div class="th" style="left:760px;width:669px;top:263px;height:46px;display:flex;align-items:center;justify-content:center"><div style="position:relative;top:1px">支付宝配置</div></div>
<div class="th" style="left:1430px;width:401px;top:263px;height:46px;display:flex;align-items:center;justify-content:center"><div style="position:relative;top:1px">微信配置</div></div>
<div class="th" style="left:1832px;width:132px;top:263px;height:117px;display:flex;align-items:center;justify-content:center"><div style="position:relative;top:1px">操作</div></div>
<div class="th" style="left:760px;width:133px;top:310px;height:70px;display:flex;align-items:center;justify-content:center"><div style="position:relative;top:1px">支付宝 APP 支付</div></div>
<div class="th" style="left:894px;width:133px;top:310px;height:70px;display:flex;align-items:center;justify-content:center"><div style="position:relative;top:1px">支付宝 PC 网站支<br>付</div></div>
<div class="th" style="left:1028px;width:133px;top:310px;height:70px;display:flex;align-items:center;justify-content:center"><div style="position:relative;top:1px">支付宝 WAP 网站<br>支付</div></div>
<div class="th" style="left:1162px;width:133px;top:310px;height:70px;display:flex;align-items:center;justify-content:center"><div style="position:relative;top:1px">支付宝扫码支付</div></div>
<div class="th" style="left:1296px;width:133px;top:310px;height:70px;display:flex;align-items:center;justify-content:center"><div style="position:relative;top:1px">支付宝条码支付</div></div>
<div class="th" style="left:1430px;width:133px;top:310px;height:70px;display:flex;align-items:center;justify-content:center"><div style="position:relative;top:1px">微信小程序支付</div></div>
<div class="th" style="left:1564px;width:133px;top:310px;height:70px;display:flex;align-items:center;justify-content:center"><div style="position:relative;top:1px">微信 JSAPI 支付</div></div>
<div class="th" style="left:1698px;width:133px;top:310px;height:70px;display:flex;align-items:center;justify-content:center"><div style="position:relative;top:1px">微信 APP 支付</div></div>
<div class="td" style="left:219px;width:138px;top:407px">7</div>
<div class="td" style="left:358px;width:133px;top:407px">示例应用</div>
<div class="sw" style="left:539px;top:405px"></div>
<div class="ok" style="left:806px;top:394px"><svg class="a" style="left:13px;top:12px" width="14" height="14" viewBox="0 0 14 14"><path d="M2.3 6.8L5.5 9.8L12 3.5" fill="none" stroke="#fff" stroke-width="1.2"/></svg></div>
<div class="ok" style="left:940px;top:394px"><svg class="a" style="left:13px;top:12px" width="14" height="14" viewBox="0 0 14 14"><path d="M2.3 6.8L5.5 9.8L12 3.5" fill="none" stroke="#fff" stroke-width="1.2"/></svg></div>
<div class="ok" style="left:1074px;top:394px"><svg class="a" style="left:13px;top:12px" width="14" height="14" viewBox="0 0 14 14"><path d="M2.3 6.8L5.5 9.8L12 3.5" fill="none" stroke="#fff" stroke-width="1.2"/></svg></div>
<div class="ok" style="left:1208px;top:394px"><svg class="a" style="left:13px;top:12px" width="14" height="14" viewBox="0 0 14 14"><path d="M2.3 6.8L5.5 9.8L12 3.5" fill="none" stroke="#fff" stroke-width="1.2"/></svg></div>
<div class="ok" style="left:1342px;top:394px"><svg class="a" style="left:13px;top:12px" width="14" height="14" viewBox="0 0 14 14"><path d="M2.3 6.8L5.5 9.8L12 3.5" fill="none" stroke="#fff" stroke-width="1.2"/></svg></div>
<div class="no" style="left:1476px;top:394px"><svg class="a" style="left:15px;top:15px" width="10" height="10" viewBox="0 0 10 10"><path d="M0.6 0.6L9.2 9.2M9.2 0.6L0.6 9.2" stroke="#fff" stroke-width="1.05"/></svg></div>
<div class="no" style="left:1610px;top:394px"><svg class="a" style="left:15px;top:15px" width="10" height="10" viewBox="0 0 10 10"><path d="M0.6 0.6L9.2 9.2M9.2 0.6L0.6 9.2" stroke="#fff" stroke-width="1.05"/></svg></div>
<div class="no" style="left:1744px;top:394px"><svg class="a" style="left:15px;top:15px" width="10" height="10" viewBox="0 0 10 10"><path d="M0.6 0.6L9.2 9.2M9.2 0.6L0.6 9.2" stroke="#fff" stroke-width="1.05"/></svg></div>
<svg class="a" style="left:1856px;top:408px" width="10" height="12" viewBox="0 0 10 12"><path d="M6.5 1L8.8 3.3L3 9.2L0.8 9.6L1.2 7.3Z M0.5 11.3H9" fill="none" stroke="#1890ff" stroke-width="1"/></svg>
<div class="lk" style="left:1868px;top:408px">修改</div>
<svg class="a" style="left:1905px;top:408px" width="10" height="12" viewBox="0 0 10 12"><path d="M0.5 2.5H9.5M3.5 2.5V0.8H6.5V2.5M1.5 2.5V11.2H8.5V2.5M3.7 4.5V9.5M6.3 4.5V9.5" fill="none" stroke="#1890ff" stroke-width="1"/></svg>
<div class="lk" style="left:1917px;top:408px">删除</div>
<div class="td" style="left:219px;width:138px;top:473px">1</div>
<div class="td" style="left:358px;width:133px;top:473px">商城应用</div>
<div class="sw" style="left:539px;top:470px"></div>
<div class="no" style="left:806px;top:459px"><svg class="a" style="left:15px;top:15px" width="10" height="10" viewBox="0 0 10 10"><path d="M0.6 0.6L9.2 9.2M9.2 0.6L0.6 9.2" stroke="#fff" stroke-width="1.05"/></svg></div>
<div class="no" style="left:940px;top:459px"><svg class="a" style="left:15px;top:15px" width="10" height="10" viewBox="0 0 10 10"><path d="M0.6 0.6L9.2 9.2M9.2 0.6L0.6 9.2" stroke="#fff" stroke-width="1.05"/></svg></div>
<div class="no" style="left:1074px;top:459px"><svg class="a" style="left:15px;top:15px" width="10" height="10" viewBox="0 0 10 10"><path d="M0.6 0.6L9.2 9.2M9.2 0.6L0.6 9.2" stroke="#fff" stroke-width="1.05"/></svg></div>
<div class="no" style="left:1208px;top:459px"><svg class="a" style="left:15px;top:15px" width="10" height="10" viewBox="0 0 10 10"><path d="M0.6 0.6L9.2 9.2M9.2 0.6L0.6 9.2" stroke="#fff" stroke-width="1.05"/></svg></div>
<div class="no" style="left:1342px;top:459px"><svg class="a" style="left:15px;top:15px" width="10" height="10" viewBox="0 0 10 10"><path d="M0.6 0.6L9.2 9.2M9.2 0.6L0.6 9.2" stroke="#fff" stroke-width="1.05"/></svg></div>
<div class="no" style="left:1476px;top:459px"><svg class="a" style="left:15px;top:15px" width="10" height="10" viewBox="0 0 10 10"><path d="M0.6 0.6L9.2 9.2M9.2 0.6L0.6 9.2" stroke="#fff" stroke-width="1.05"/></svg></div>
<div class="no" style="left:1610px;top:459px"><svg class="a" style="left:15px;top:15px" width="10" height="10" viewBox="0 0 10 10"><path d="M0.6 0.6L9.2 9.2M9.2 0.6L0.6 9.2" stroke="#fff" stroke-width="1.05"/></svg></div>
<div class="no" style="left:1744px;top:459px"><svg class="a" style="left:15px;top:15px" width="10" height="10" viewBox="0 0 10 10"><path d="M0.6 0.6L9.2 9.2M9.2 0.6L0.6 9.2" stroke="#fff" stroke-width="1.05"/></svg></div>
<svg class="a" style="left:1856px;top:473px" width="10" height="12" viewBox="0 0 10 12"><path d="M6.5 1L8.8 3.3L3 9.2L0.8 9.6L1.2 7.3Z M0.5 11.3H9" fill="none" stroke="#1890ff" stroke-width="1"/></svg>
<div class="lk" style="left:1868px;top:473px">修改</div>
<svg class="a" style="left:1905px;top:473px" width="10" height="12" viewBox="0 0 10 12"><path d="M0.5 2.5H9.5M3.5 2.5V0.8H6.5V2.5M1.5 2.5V11.2H8.5V2.5M3.7 4.5V9.5M6.3 4.5V9.5" fill="none" stroke="#1890ff" stroke-width="1"/></svg>
<div class="lk" style="left:1917px;top:473px">删除</div>
<!--/TABLE-->
  <div class="t" style="left:1552px;top:548px;font-size:13px;line-height:13px;color:#606266">共 2 条</div>
  <div class="a" style="left:1608px;top:539px;width:100px;height:28px;border:1px solid #dcdfe6;border-radius:3px"></div>
  <div class="t" style="left:1628px;top:548px;font-size:13px;line-height:13px;color:#606266">10条/页</div>
  <svg class="a" style="left:1690px;top:551px" width="10" height="6" viewBox="0 0 10 6"><path d="M0.5 0.5L5 5L9.5 0.5" fill="none" stroke="#c0c4cc" stroke-width="1.1"/></svg>
  <div class="a" style="left:1728px;top:539px;width:30px;height:28px;border-radius:2px;background:#f4f4f5"></div>
  <svg class="a" style="left:1739px;top:548px" width="6" height="10" viewBox="0 0 6 10"><path d="M5.5 0.5L1 5L5.5 9.5" fill="none" stroke="#c0c4cc" stroke-width="1.1"/></svg>
  <div class="a" style="left:1768px;top:539px;width:30px;height:28px;border-radius:2px;background:#1890ff;color:#fff;font-size:13px;font-weight:700;line-height:30px;text-align:center">1</div>
  <div class="a" style="left:1808px;top:539px;width:30px;height:28px;border-radius:2px;background:#f4f4f5"></div>
  <svg class="a" style="left:1820px;top:548px" width="6" height="10" viewBox="0 0 6 10"><path d="M0.5 0.5L5 5L0.5 9.5" fill="none" stroke="#c0c4cc" stroke-width="1.1"/></svg>
  <div class="t" style="left:1867px;top:548px;font-size:13px;line-height:13px;color:#606266">前往</div>
  <div class="a" style="left:1897px;top:539px;width:45px;height:28px;border:1px solid #dcdfe6;border-radius:3px;text-align:center;font-size:13px;line-height:28px;color:#606266">1</div>
  <div class="t" style="left:1947px;top:548px;font-size:13px;line-height:13px;color:#606266">页</div>
  <div class="a" style="left:1973px;top:68px;width:11px;height:640px;background:rgba(0,10,40,.02);z-index:6"></div>
</div>
</body></html>
